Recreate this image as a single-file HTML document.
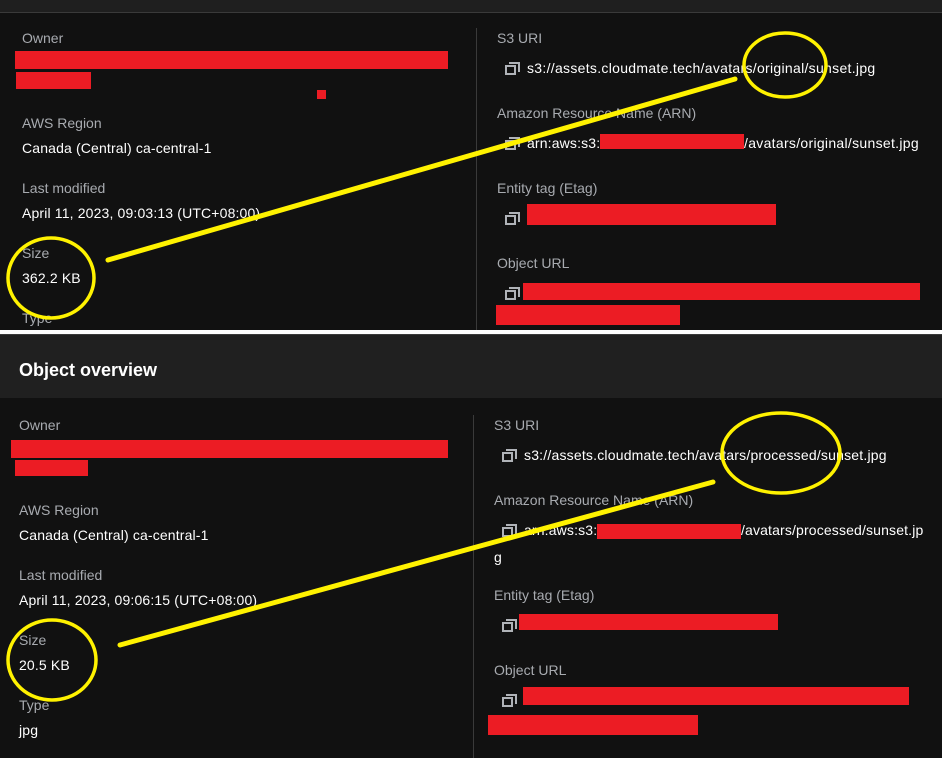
<!DOCTYPE html><html><head><style>
body{margin:0;width:942px;height:758px;background:#111;position:relative;overflow:hidden;font-family:"Liberation Sans",sans-serif;font-size:14px;}
.a{position:absolute;white-space:nowrap;line-height:16px}
.l{color:#a8abb0}.v{color:#fff;letter-spacing:0.15px}
.r{position:absolute;background:#ec1c24}
.i{position:absolute;width:11px;height:10px;border:2px solid #b0b3b8;box-sizing:border-box}
.i:before{content:"";position:absolute;left:2px;top:-5px;width:11px;height:10px;border:2px solid #b0b3b8;border-left:none;border-bottom:none;box-sizing:border-box}
</style></head><body>
<div style="position:absolute;left:0;top:0;width:942px;height:12px;background:#1f1f1f;border-bottom:1px solid #3a3a3a"></div>
<div style="position:absolute;left:476px;top:28px;width:1px;height:302px;background:#3a3a3a"></div>
<div style="position:absolute;left:0;top:330px;width:942px;height:4px;background:#fff"></div>
<div style="position:absolute;left:0;top:334px;width:942px;height:64px;background:#202020;border-top:1px solid #3a3a3a;box-sizing:border-box"></div>
<div class="a v" style="left:19px;top:360px;font-size:18px;font-weight:bold;line-height:20px;letter-spacing:0">Object overview</div>
<div style="position:absolute;left:473px;top:415px;width:1px;height:343px;background:#3a3a3a"></div>

<div class="a l" style="left:22px;top:30px">Owner</div>
<div class="r" style="left:15px;top:51px;width:433px;height:18px"></div>
<div class="r" style="left:16px;top:72px;width:75px;height:17px"></div>
<div class="r" style="left:317px;top:90px;width:9px;height:9px"></div>
<div class="a l" style="left:22px;top:115px">AWS Region</div>
<div class="a v" style="left:22px;top:140px">Canada (Central) ca-central-1</div>
<div class="a l" style="left:22px;top:180px">Last modified</div>
<div class="a v" style="left:22px;top:205px">April 11, 2023, 09:03:13 (UTC+08:00)</div>
<div class="a l" style="left:22px;top:245px">Size</div>
<div class="a v" style="left:22px;top:270px">362.2 KB</div>
<div class="a l" style="left:22px;top:310px">Type</div>

<div class="a l" style="left:497px;top:30px">S3 URI</div>
<div class="i" style="left:505px;top:65px"></div>
<div class="a v" style="left:527px;top:60px;letter-spacing:0.3px">s3://assets.cloudmate.tech/avatars/original/sunset.jpg</div>
<div class="a l" style="left:497px;top:105px">Amazon Resource Name (ARN)</div>
<div class="i" style="left:505px;top:140px"></div>
<div class="a v" style="left:527px;top:135px">arn:aws:s3::</div>
<div class="a v" style="left:744px;top:135px;letter-spacing:0.3px">/avatars/original/sunset.jpg</div>
<div class="r" style="left:600px;top:134px;width:144px;height:15px"></div>
<div class="a l" style="left:497px;top:180px">Entity tag (Etag)</div>
<div class="i" style="left:505px;top:215px"></div>
<div class="r" style="left:527px;top:204px;width:249px;height:21px"></div>
<div class="a l" style="left:497px;top:255px">Object URL</div>
<div class="i" style="left:505px;top:290px"></div>
<div class="r" style="left:523px;top:283px;width:397px;height:17px"></div>
<div class="r" style="left:496px;top:305px;width:184px;height:20px"></div>

<div class="a l" style="left:19px;top:417px">Owner</div>
<div class="r" style="left:11px;top:440px;width:437px;height:18px"></div>
<div class="r" style="left:15px;top:460px;width:73px;height:16px"></div>
<div class="a l" style="left:19px;top:502px">AWS Region</div>
<div class="a v" style="left:19px;top:527px">Canada (Central) ca-central-1</div>
<div class="a l" style="left:19px;top:567px">Last modified</div>
<div class="a v" style="left:19px;top:592px">April 11, 2023, 09:06:15 (UTC+08:00)</div>
<div class="a l" style="left:19px;top:632px">Size</div>
<div class="a v" style="left:19px;top:657px">20.5 KB</div>
<div class="a l" style="left:19px;top:697px">Type</div>
<div class="a v" style="left:19px;top:722px">jpg</div>

<div class="a l" style="left:494px;top:417px">S3 URI</div>
<div class="i" style="left:502px;top:452px"></div>
<div class="a v" style="left:524px;top:447px;letter-spacing:0.2px">s3://assets.cloudmate.tech/avatars/processed/sunset.jpg</div>
<div class="a l" style="left:494px;top:492px">Amazon Resource Name (ARN)</div>
<div class="i" style="left:502px;top:527px"></div>
<div class="a v" style="left:524px;top:522px">arn:aws:s3::</div>
<div class="a v" style="left:741px;top:522px">/avatars/processed/sunset.jp</div>
<div class="a v" style="left:494px;top:549px">g</div>
<div class="r" style="left:597px;top:524px;width:144px;height:15px"></div>
<div class="a l" style="left:494px;top:587px">Entity tag (Etag)</div>
<div class="i" style="left:502px;top:622px"></div>
<div class="r" style="left:519px;top:614px;width:259px;height:16px"></div>
<div class="a l" style="left:494px;top:662px">Object URL</div>
<div class="i" style="left:502px;top:697px"></div>
<div class="r" style="left:523px;top:687px;width:386px;height:18px"></div>
<div class="r" style="left:488px;top:715px;width:210px;height:20px"></div>

<svg style="position:absolute;left:0;top:0" width="942" height="758">
<g fill="none" stroke="#fff200" stroke-width="3.5">
<ellipse cx="785" cy="65" rx="41" ry="32"/>
<ellipse cx="51" cy="278" rx="43" ry="40"/>
<ellipse cx="781" cy="453" rx="59" ry="40"/>
<ellipse cx="52" cy="660" rx="44" ry="40"/>
</g>
<g stroke="#fff200" stroke-width="5" stroke-linecap="round">
<line x1="108" y1="260" x2="735" y2="79"/>
<line x1="120" y1="645" x2="713" y2="482"/>
</g>
</svg>
</body></html>
